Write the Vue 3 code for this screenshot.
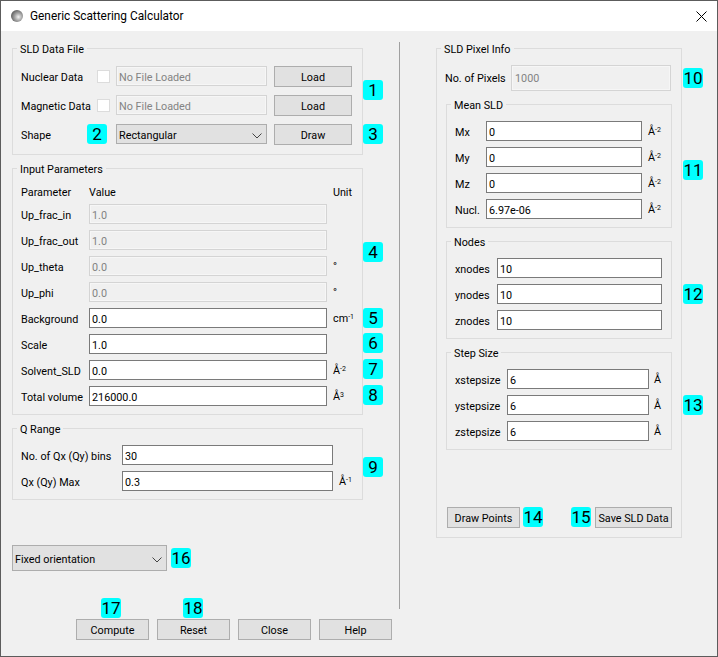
<script setup>
// Left column rows
const params = [
  { label: 'Up_frac_in', value: '1.0', disabled: true },
  { label: 'Up_frac_out', value: '1.0', disabled: true },
  { label: 'Up_theta', value: '0.0', disabled: true, unit: '°' },
  { label: 'Up_phi', value: '0.0', disabled: true, unit: '°' },
  { label: 'Background', value: '0.0', unit: 'cm', sup: '-1' },
  { label: 'Scale', value: '1.0' },
  { label: 'Solvent_SLD', value: '0.0', unit: 'Å', sup: '-2' },
  { label: 'Total volume', value: '216000.0', unit: 'Å', sup: '3' }
]
const dataFiles = ['Nuclear Data', 'Magnetic Data']

// Right column rows
const meanSld = [
  { label: 'Mx', value: '0' },
  { label: 'My', value: '0' },
  { label: 'Mz', value: '0' },
  { label: 'Nucl.', value: '6.97e-06' }
]
const nodes = [
  { label: 'xnodes', value: '10' },
  { label: 'ynodes', value: '10' },
  { label: 'znodes', value: '10' }
]
const steps = [
  { label: 'xstepsize', value: '6' },
  { label: 'ystepsize', value: '6' },
  { label: 'zstepsize', value: '6' }
]
const footer = ['Compute', 'Reset', 'Close', 'Help']

// Numbered callouts that sit on top of the dialog
const callouts = [
  { n: 1, x: 363, y: 80 }, { n: 2, x: 87, y: 124 }, { n: 3, x: 363, y: 124 },
  { n: 4, x: 363, y: 242 }, { n: 5, x: 363, y: 308 }, { n: 6, x: 363, y: 333 },
  { n: 7, x: 363, y: 359 }, { n: 8, x: 363, y: 385 }, { n: 9, x: 363, y: 457 },
  { n: 10, x: 683, y: 68 }, { n: 11, x: 683, y: 160 }, { n: 12, x: 683, y: 284 },
  { n: 13, x: 683, y: 395 }, { n: 14, x: 523, y: 507 }, { n: 15, x: 571, y: 507 },
  { n: 16, x: 171, y: 548 }, { n: 17, x: 101, y: 598 }, { n: 18, x: 183, y: 598 }
]
</script>

<template>
  <div class="window">
    <div class="titlebar">
      <span class="app-icon"></span>
      <span class="title">Generic Scattering Calculator</span>
      <svg class="close" width="11" height="11" viewBox="0 0 11 11">
        <path d="M0.5 0.5 L10.5 10.5 M10.5 0.5 L0.5 10.5" stroke="#000" stroke-width="1" fill="none" />
      </svg>
    </div>

    <div class="content">
      <div class="left">
        <section class="group file-group">
          <div class="group-title">SLD Data File</div>
          <div class="rows file-rows">
            <div v-for="f in dataFiles" :key="f" class="row">
              <span class="file-label">{{ f }}</span>
              <span class="check"></span>
              <input class="field file-field" disabled value="No File Loaded" />
              <button class="btn file-btn">Load</button>
            </div>
            <div class="row">
              <span class="shape-label">Shape</span>
              <div class="combo shape-combo">
                <span>Rectangular</span>
                <svg width="10" height="6" viewBox="0 0 10 6">
                  <path d="M0.5 0.5 L5 5 L9.5 0.5" stroke="#444" fill="none" />
                </svg>
              </div>
              <button class="btn file-btn">Draw</button>
            </div>
          </div>
        </section>

        <section class="group param-group">
          <div class="group-title">Input Parameters</div>
          <div class="param-head">
            <span class="param-label">Parameter</span>
            <span>Value</span>
            <span class="unit-head">Unit</span>
          </div>
          <div class="rows param-rows">
            <div v-for="p in params" :key="p.label" class="row">
              <span class="param-label">{{ p.label }}</span>
              <input class="field param-field" :disabled="p.disabled" :value="p.value" />
              <span v-if="p.unit" class="unit">{{ p.unit }}<sup v-if="p.sup">{{ p.sup }}</sup></span>
            </div>
          </div>
        </section>

        <section class="group q-group">
          <div class="group-title">Q Range</div>
          <div class="rows q-rows">
            <div class="row">
              <span class="q-label">No. of Qx (Qy) bins</span>
              <input class="field q-field" value="30" />
            </div>
            <div class="row">
              <span class="q-label">Qx (Qy) Max</span>
              <input class="field q-field" value="0.3" />
              <span class="unit">Å<sup>-1</sup></span>
            </div>
          </div>
        </section>

        <div class="combo orient-combo">
          <span>Fixed orientation</span>
          <svg width="10" height="6" viewBox="0 0 10 6">
            <path d="M0.5 0.5 L5 5 L9.5 0.5" stroke="#444" fill="none" />
          </svg>
        </div>

        <div class="footer">
          <button v-for="b in footer" :key="b" class="btn footer-btn">{{ b }}</button>
        </div>
      </div>

      <div class="separator"></div>

      <section class="group pixel-group">
        <div class="group-title">SLD Pixel Info</div>
        <div class="row pixel-row">
          <span class="pixel-label">No. of Pixels</span>
          <input class="field pixel-field" disabled value="1000" />
        </div>

        <section class="group sub-group">
          <div class="group-title">Mean SLD</div>
          <div class="rows sub-rows">
            <div v-for="m in meanSld" :key="m.label" class="row">
              <span class="mean-label">{{ m.label }}</span>
              <input class="field mean-field" :value="m.value" />
              <span class="unit">Å<sup>-2</sup></span>
            </div>
          </div>
        </section>

        <section class="group sub-group">
          <div class="group-title">Nodes</div>
          <div class="rows sub-rows">
            <div v-for="m in nodes" :key="m.label" class="row">
              <span class="node-label">{{ m.label }}</span>
              <input class="field node-field" :value="m.value" />
            </div>
          </div>
        </section>

        <section class="group sub-group">
          <div class="group-title">Step Size</div>
          <div class="rows sub-rows">
            <div v-for="m in steps" :key="m.label" class="row">
              <span class="step-label">{{ m.label }}</span>
              <input class="field step-field" :value="m.value" />
              <span class="unit step-unit">Å</span>
            </div>
          </div>
        </section>

        <div class="pixel-actions">
          <button class="btn draw-btn">Draw Points</button>
          <button class="btn save-btn">Save SLD Data</button>
        </div>
      </section>
    </div>

    <span
      v-for="c in callouts"
      :key="c.n"
      class="callout"
      :style="{ left: c.x + 'px', top: c.y + 'px' }"
    >{{ c.n }}</span>
  </div>
</template>

<style scoped>
.window {
  position: relative;
  width: 718px;
  height: 657px;
  box-sizing: border-box;
  border: 1px solid #5c5c5c;
  background: #f0f0f0;
  color: #000;
  font-family: Roboto, "Noto Sans", sans-serif;
  font-size: 10.8px;
  line-height: 16px;
  overflow: hidden;
}

.titlebar {
  display: flex;
  align-items: center;
  height: 30px;
  background: #fff;
  padding-left: 10px;
}

.app-icon {
  width: 12px;
  height: 12px;
  border-radius: 50%;
  background: radial-gradient(circle at 62% 58%, #f2f2f2 0%, #a8a8a8 35%, #4a4a4a 85%);
}

.title {
  margin-left: 7px;
  font-size: 11.85px;
}

.close {
  margin-left: auto;
  margin-right: 10px;
}

.content {
  display: flex;
  align-items: flex-start;
  padding: 17px 0 0 11px;
}

.left {
  width: 380px;
  flex: none;
}

.separator {
  flex: none;
  width: 1px;
  height: 567px;
  margin: -6px 0 0 7px;
  background: #a0a0a0;
}

.group {
  box-sizing: border-box;
  border: 1px solid #dcdcdc;
  padding: 0 8px 8px;
}

.group-title {
  position: relative;
  width: fit-content;
  height: 16px;
  margin: -8px 0 0 -4px;
  padding: 0 3px;
  background: #f0f0f0;
  line-height: 18px;
}

.row {
  display: flex;
  align-items: flex-start;
  height: 20px;
}

.row > span {
  height: 20px;
  line-height: 24px;
  white-space: nowrap;
}

.rows {
  display: flex;
  flex-direction: column;
  gap: 6px;
}

.field {
  display: block;
  box-sizing: border-box;
  height: 20px;
  margin: 0;
  padding: 3px 2px 0;
  border: 1px solid #7a7a7a;
  border-radius: 0;
  background: #fff;
  color: #000;
  font: inherit;
  line-height: 13px;
  outline: none;
}

.field:disabled {
  border-color: #d4d4d4;
  background: #f0f0f0;
  box-shadow: inset 0 0 0 1px #f6f6f6;
  color: #838383;
}

.btn {
  display: block;
  box-sizing: border-box;
  height: 21px;
  margin: 0;
  padding: 3px 0 0;
  border: 1px solid #adadad;
  border-radius: 0;
  background: #e1e1e1;
  color: #000;
  font: inherit;
  white-space: nowrap;
}

.combo {
  display: flex;
  align-items: center;
  justify-content: space-between;
  box-sizing: border-box;
  border: 1px solid #adadad;
  background: #e1e1e1;
  padding: 3px 4px 0 2px;
}

/* SLD data file */
.file-group {
  width: 351px;
  height: 107px;
}

.file-rows {
  gap: 8px;
  margin-top: 9px;
}

.file-rows .row {
  height: 21px;
}

.file-label {
  width: 76px;
}

.row > .check {
  box-sizing: border-box;
  width: 13px;
  height: 13px;
  margin: 4px 6px 0 0;
  border: 1px solid #dcdcdc;
  background: #fff;
}

.file-field,
.shape-combo {
  width: 151px;
  height: 20px;
}

.file-btn {
  width: 78px;
  margin-left: 7px;
}

.shape-label {
  width: 95px;
}

/* Input parameters */
.param-group {
  width: 351px;
  margin-top: 13px;
}

.param-head {
  display: flex;
  margin-top: 7px;
  line-height: 18px;
  height: 16px;
}

.unit-head {
  margin-left: auto;
  margin-right: 2px;
}

.param-rows {
  margin-top: 4px;
}

.param-label {
  width: 68px;
  flex: none;
}

.param-field {
  width: 238px;
}

.row > .unit {
  margin-left: 6px;
  line-height: 22px;
}

.unit sup {
  font-size: 7px;
  line-height: 0;
  vertical-align: 3px;
}

/* Q range */
.q-group {
  width: 351px;
  margin-top: 13px;
}

.q-rows {
  margin-top: 8px;
}

.q-label {
  width: 101px;
  flex: none;
}

.q-field {
  width: 211px;
}

.orient-combo {
  width: 155px;
  height: 26px;
  margin-top: 45px;
}

.footer {
  display: flex;
  gap: 8px;
  margin: 48px 0 0 64px;
}

.footer-btn {
  width: 73px;
}

/* SLD pixel info */
.pixel-group {
  flex: none;
  width: 246px;
  margin-left: 36px;
  padding: 0 9px 9px;
}

.pixel-group > .group-title {
  margin-left: -5px;
}

.pixel-row {
  height: 26px;
  margin-top: 8px;
}

.row.pixel-row > span {
  height: 26px;
  line-height: 28px;
}

.pixel-label {
  width: 66px;
  flex: none;
  margin-left: -1px;
  margin-right: 0;
}

.pixel-field {
  width: 160px;
  height: 26px;
  padding: 1px 3px 0;
}

.sub-group {
  margin-top: 13px;
}

.sub-rows {
  margin-top: 8px;
}

.mean-label {
  width: 31px;
  flex: none;
}

.mean-field {
  width: 156px;
}

.node-label {
  width: 42px;
  flex: none;
}

.node-field {
  width: 165px;
}

.step-label {
  width: 52px;
  flex: none;
}

.step-field {
  width: 142px;
}

.row > .step-unit {
  margin-left: 5px;
}

.pixel-actions {
  display: flex;
  justify-content: space-between;
  margin: 57px 0 0 1px;
}

.draw-btn {
  width: 73px;
}

.save-btn {
  width: 77px;
}

/* Numbered callouts */
.callout {
  position: absolute;
  box-sizing: border-box;
  width: 20px;
  height: 20px;
  margin: -1px 0 0 -1px;
  border-radius: 3px;
  background: #00ffff;
  color: #000;
  font-size: 17px;
  line-height: 21px;
  text-align: center;
  letter-spacing: 0;
}
</style>
